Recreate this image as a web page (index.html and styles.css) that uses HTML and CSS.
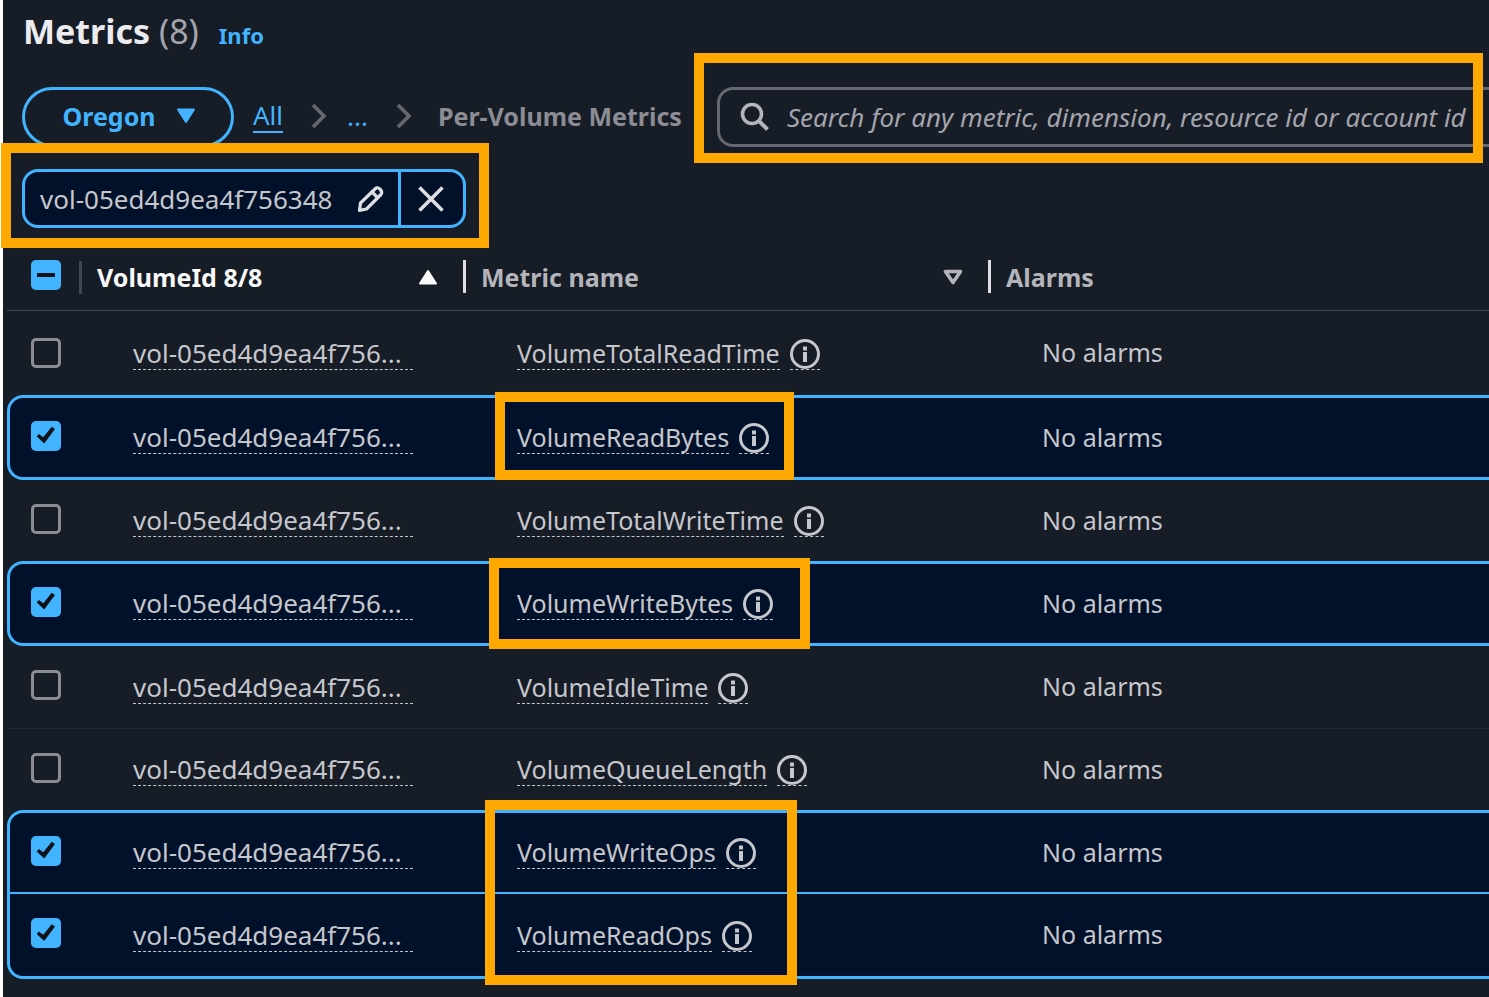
FILE: index.html
```html
<!DOCTYPE html>
<html lang="en">
<head>
<meta charset="utf-8">
<title>Metrics</title>
<link rel="stylesheet" href="styles.css">
</head>
<body>
<svg class="sprite" aria-hidden="true">
  <symbol id="info" viewBox="0 0 30 30"><circle cx="15" cy="15" r="13.5" fill="none" stroke="currentColor" stroke-width="3"/><path d="M13 7.5h4v4h-4zM13 13h4v10h-4z" fill="currentColor"/></symbol>
  <symbol id="chevron" viewBox="0 0 16 26"><path d="M2 2l11 11L2 24" fill="none" stroke="currentColor" stroke-width="3.6"/></symbol>
</svg>
<main class="panel">
  <header class="title-row">
    <h1 class="title">Metrics <span class="count">(8)</span></h1>
    <a class="info-link" href="#">Info</a>
  </header>

  <div class="toolbar">
    <button class="region" type="button">Oregon
      <svg width="20" height="16" viewBox="0 0 20 16"><path d="M2 1.500h16L10 14z" fill="currentColor" stroke="currentColor" stroke-width="2" stroke-linejoin="round"/></svg>
    </button>
    <nav class="crumbs" aria-label="Breadcrumb">
      <a class="crumb-all" href="#">All</a>
      <svg class="chevron" width="16" height="26"><use href="#chevron"/></svg>
      <a class="crumb-more" href="#">...</a>
      <svg class="chevron" width="16" height="26"><use href="#chevron"/></svg>
      <span class="crumb-current">Per-Volume Metrics</span>
    </nav>
    <label class="search">
      <svg width="30" height="30" viewBox="0 0 30 30"><circle cx="12" cy="12" r="9.500" fill="none" stroke="currentColor" stroke-width="3.600"/><path d="M18.500 18.500l9 9" fill="none" stroke="currentColor" stroke-width="4"/></svg>
      <input class="search-input" type="text" aria-label="Search metrics" placeholder="Search for any metric, dimension, resource id or account id">
    </label>
  </div>

  <div class="token">
    <button class="token-edit" type="button">vol-05ed4d9ea4f756348
      <svg width="28" height="28" viewBox="0 0 28 28" fill="none" stroke="currentColor" stroke-width="3.200" stroke-linejoin="round"><path d="M2.500 25.500l1-7.500L18.500 3.500c2.500-2.500 8 2.500 5.500 6L9.500 24z"/><path d="M15 7l6 6"/></svg>
    </button>
    <button class="token-remove" type="button" aria-label="Remove filter">
      <svg width="26" height="26" viewBox="0 0 26 26"><path d="M1.500 1.500l23 23M24.500 1.500l-23 23" fill="none" stroke="currentColor" stroke-width="3.600"/></svg>
    </button>
  </div>

  <table class="metrics">
    <colgroup><col class="col-check"><col class="col-volume"><col class="col-metric"><col></colgroup>
    <thead>
      <tr>
        <th class="head-check"><input class="check mixed" type="checkbox" aria-label="Select all"></th>
        <th class="sorted"><div class="head">VolumeId 8/8<svg width="20" height="16" viewBox="0 0 20 16"><path d="M2 14.500h16L10 2z" fill="currentColor" stroke="currentColor" stroke-width="2" stroke-linejoin="round"/></svg></div></th>
        <th><div class="head">Metric name<svg width="20" height="16" viewBox="0 0 20 16"><path d="M2.500 2.500h15L10 13.500z" fill="none" stroke="currentColor" stroke-width="3.600" stroke-linejoin="round"/></svg></div></th>
        <th><div class="head">Alarms</div></th>
      </tr>
    </thead>
    <tbody>
      <tr class="first">
        <td><input class="check" type="checkbox" aria-label="VolumeTotalReadTime"></td>
        <td><span class="term volume">vol-05ed4d9ea4f756...</span></td>
        <td><span class="name"><span class="term">VolumeTotalReadTime</span><span class="term icon"><svg width="30" height="30"><use href="#info"/></svg></span></span></td>
        <td>No alarms</td>
      </tr>
      <tr class="selected">
        <td><input class="check" type="checkbox" checked aria-label="VolumeReadBytes"></td>
        <td><span class="term volume">vol-05ed4d9ea4f756...</span></td>
        <td><span class="name"><span class="term">VolumeReadBytes</span><span class="term icon"><svg width="30" height="30"><use href="#info"/></svg></span></span></td>
        <td>No alarms</td>
      </tr>
      <tr>
        <td><input class="check" type="checkbox" aria-label="VolumeTotalWriteTime"></td>
        <td><span class="term volume">vol-05ed4d9ea4f756...</span></td>
        <td><span class="name"><span class="term">VolumeTotalWriteTime</span><span class="term icon"><svg width="30" height="30"><use href="#info"/></svg></span></span></td>
        <td>No alarms</td>
      </tr>
      <tr class="selected">
        <td><input class="check" type="checkbox" checked aria-label="VolumeWriteBytes"></td>
        <td><span class="term volume">vol-05ed4d9ea4f756...</span></td>
        <td><span class="name"><span class="term">VolumeWriteBytes</span><span class="term icon"><svg width="30" height="30"><use href="#info"/></svg></span></span></td>
        <td>No alarms</td>
      </tr>
      <tr class="divided">
        <td><input class="check" type="checkbox" aria-label="VolumeIdleTime"></td>
        <td><span class="term volume">vol-05ed4d9ea4f756...</span></td>
        <td><span class="name"><span class="term">VolumeIdleTime</span><span class="term icon"><svg width="30" height="30"><use href="#info"/></svg></span></span></td>
        <td>No alarms</td>
      </tr>
      <tr>
        <td><input class="check" type="checkbox" aria-label="VolumeQueueLength"></td>
        <td><span class="term volume">vol-05ed4d9ea4f756...</span></td>
        <td><span class="name"><span class="term">VolumeQueueLength</span><span class="term icon"><svg width="30" height="30"><use href="#info"/></svg></span></span></td>
        <td>No alarms</td>
      </tr>
      <tr class="selected joins-next">
        <td><input class="check" type="checkbox" checked aria-label="VolumeWriteOps"></td>
        <td><span class="term volume">vol-05ed4d9ea4f756...</span></td>
        <td><span class="name"><span class="term">VolumeWriteOps</span><span class="term icon"><svg width="30" height="30"><use href="#info"/></svg></span></span></td>
        <td>No alarms</td>
      </tr>
      <tr class="selected joins-previous">
        <td><input class="check" type="checkbox" checked aria-label="VolumeReadOps"></td>
        <td><span class="term volume">vol-05ed4d9ea4f756...</span></td>
        <td><span class="name"><span class="term">VolumeReadOps</span><span class="term icon"><svg width="30" height="30"><use href="#info"/></svg></span></span></td>
        <td>No alarms</td>
      </tr>
    </tbody>
  </table>

  <div class="mark mark-search"></div>
  <div class="mark mark-token"></div>
  <div class="mark mark-read-bytes"></div>
  <div class="mark mark-write-bytes"></div>
  <div class="mark mark-ops"></div>
</main>
</body>
</html>
```
FILE: styles.css
```css
* { box-sizing: border-box; }

body {
  margin: 0;
  background: #fff;
  overflow: hidden;
  font: 25px/32px "Noto Sans", "Open Sans", sans-serif;
  color: #c6c6cd;
}

svg { display: block; flex: none; }
button { font: inherit; cursor: pointer; }
.sprite { position: absolute; width: 0; height: 0; }

.panel {
  position: relative;
  min-height: 100vh;
  margin-left: 3px;
  padding-left: 4px;
  background: #161d26;
}

.title-row {
  display: flex;
  align-items: baseline;
  gap: 20px;
  height: 87px;
  padding: 7px 0 0 16px;
}
.title { margin: 0; font-size: 34px; line-height: 48px; font-weight: 700; color: #ebebf0; }
.count { font-weight: 400; color: #a4a4ad; }
.info-link { font-size: 22px; font-weight: 700; color: #42b4ff; text-decoration: none; }

.toolbar { display: flex; align-items: center; padding-left: 15px; }
.region {
  display: flex;
  align-items: center;
  justify-content: center;
  gap: 20px;
  width: 212px;
  height: 60px;
  padding: 0 0 2px 2px;
  border: 3px solid #42b4ff;
  border-radius: 30px;
  background: none;
  color: #42b4ff;
  font-weight: 700;
}
.crumbs { display: flex; align-items: center; flex: none; padding: 0 0 2px 19px; white-space: nowrap; }
.crumbs a { font-size: 26px; color: #42b4ff; text-decoration: none; }
.crumb-all { border-bottom: 2px solid #42b4ff; }
.chevron { color: #656871; margin-left: 28px; }
.crumb-more { margin-left: 20px; }
.crumb-current { margin-left: 26px; font-weight: 700; color: #8c8c94; }

.search {
  display: flex;
  align-items: center;
  flex: 1;
  gap: 17px;
  height: 60px;
  margin: 0 -20px 0 35px;
  padding-left: 20px;
  border: 3px solid #656871;
  border-radius: 16px;
  color: #b4b4bb;
}
.search-input {
  flex: 1;
  min-width: 0;
  padding: 0;
  border: 0;
  outline: 0;
  background: none;
  font: inherit;
  font-size: 26px;
  color: inherit;
}
.search-input::placeholder { font-style: italic; color: #a4a4ad; opacity: 1; }

.token {
  display: flex;
  width: 444px;
  height: 59px;
  margin: 22px 0 0 15px;
  border: 3px solid #42b4ff;
  border-radius: 16px;
  background: #001129;
}
.token button { display: flex; align-items: center; padding: 0; border: 0; background: none; color: #dedee3; }
.token .token-edit { flex: 1; justify-content: space-between; padding: 0 13px 0 15px; font-size: 26px; color: #c6c6cd; }
.token-edit svg { color: #dedee3; }
.token .token-remove { width: 65px; justify-content: center; padding-right: 2px; border-left: 3px solid #42b4ff; }

.metrics { width: 100%; margin-top: 15px; border-collapse: separate; border-spacing: 0; table-layout: fixed; }
.col-check { width: 75px; }
.col-volume { width: 384px; }
.col-metric { width: 525px; }

.metrics th { height: 68px; padding: 0; border-bottom: 1px solid #424650; text-align: left; color: #b4b4bb; }
.metrics .sorted { color: #f9f9fa; }
.metrics .head-check { padding: 0 0 4px 24px; }
.head {
  display: flex;
  align-items: center;
  justify-content: space-between;
  height: 33px;
  padding: 0 25px 0 15px;
  border-right: 3px solid #dedee3;
}
.metrics th:last-child .head { border-right: 0; }
.head-check { background: linear-gradient(#424650, #424650) 72px 18px / 3px 33px no-repeat; }

.metrics td { height: 81px; padding: 0 0 2px 51px; }
.metrics td:first-child { padding: 0 0 4px 24px; }
.metrics .first td { height: 84px; }
.metrics .first td:first-child { padding-bottom: 0; }
.metrics .divided td { height: 83px; border-bottom: 1px solid #232b37; }
.metrics .selected td { height: 85px; background: #001129; border: solid #42b4ff; border-width: 3px 0; }
.metrics .selected td:first-child { padding-left: 21px; border-left-width: 3px; border-radius: 16px 0 0 16px; }
.metrics .joins-next td { height: 84px; border-bottom-width: 2px; }
.metrics .joins-next td:first-child { border-bottom-left-radius: 0; }
.metrics .joins-previous td { border-top-width: 0; }
.metrics .joins-previous td:first-child { border-top-left-radius: 0; }

.check {
  display: block;
  appearance: none;
  width: 30px;
  height: 30px;
  margin: 0;
  border: 3px solid #8c8c94;
  border-radius: 5px;
}
.check:checked, .check.mixed { border: 0; background: #42b4ff; }
.check:checked::before {
  content: "";
  display: block;
  width: 30px;
  height: 30px;
  background: #0f141a;
  clip-path: polygon(19% 53%, 26% 45%, 41% 56%, 69% 21%, 80% 28%, 44% 77%);
}
.check.mixed::before { content: ""; display: block; width: 18px; height: 4px; margin: 13px 6px; background: #0f141a; }

.term { display: inline-block; border-bottom: 1px dashed #c6c6cd; }
.volume { width: 280px; font-size: 26px; white-space: nowrap; }
.name { display: inline-flex; align-items: flex-end; gap: 10px; }
.metrics td .term, .metrics td .name { vertical-align: middle; }

.mark { position: absolute; border: 10px solid #ffa900; pointer-events: none; }
.mark-search { left: 691px; top: 53px; width: 789px; height: 110px; }
.mark-token { left: -2px; top: 143px; width: 488px; height: 105px; }
.mark-read-bytes { left: 492px; top: 392px; width: 299px; height: 88px; }
.mark-write-bytes { left: 486px; top: 558px; width: 321px; height: 91px; }
.mark-ops { left: 482px; top: 800px; width: 312px; height: 185px; }
```
